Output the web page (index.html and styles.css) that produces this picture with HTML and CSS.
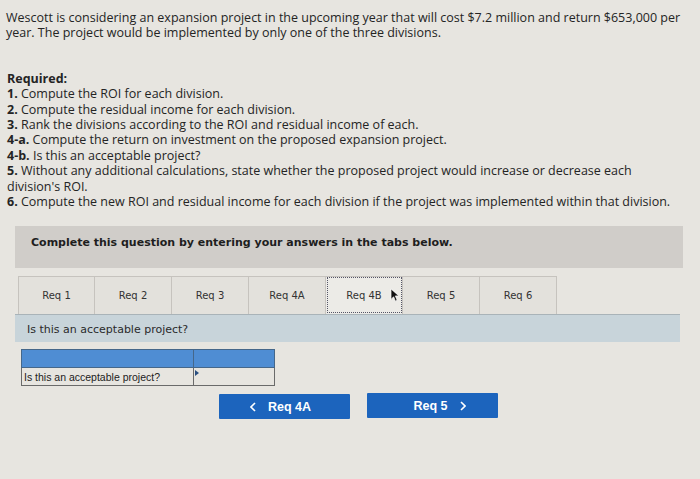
FILE: index.html
```html
<!DOCTYPE html>
<html lang="en">
<head>
  <meta charset="UTF-8" />
  <title>Wescott expansion project</title>
  <link rel="stylesheet" href="styles.css">
</head>
<body>

<div class="problem">
  <p class="intro">Wescott is considering an expansion project in the upcoming year that will cost $7.2 million and return $653,000 per year. The project would be implemented by only one of the three divisions.</p>

  <div class="required">
    <b>Required:</b><br>
    <b>1.</b> Compute the ROI for each division.<br>
    <b>2.</b> Compute the residual income for each division.<br>
    <b>3.</b> Rank the divisions according to the ROI and residual income of each.<br>
    <b>4-a.</b> Compute the return on investment on the proposed expansion project.<br>
    <b>4-b.</b> Is this an acceptable project?<br>
    <b>5.</b> Without any additional calculations, state whether the proposed project would increase or decrease each division's ROI.<br>
    <b>6.</b> Compute the new ROI and residual income for each division if the project was implemented within that division.
  </div>
</div>

<div class="instructions">Complete this question by entering your answers in the tabs below.</div>

<div class="tabs">
  <div class="tab">Req 1</div>
  <div class="tab">Req 2</div>
  <div class="tab">Req 3</div>
  <div class="tab">Req 4A</div>
  <div class="tab active">Req 4B
    <svg class="cursor" viewBox="0 0 10 16" width="9" height="14">
      <path d="M1,1 L1,13 L4,10 L6,15 L8,14 L6,9 L10,9 Z" fill="#111" stroke="#fff" stroke-width="0.8"/>
    </svg>
  </div>
  <div class="tab">Req 5</div>
  <div class="tab">Req 6</div>
</div>

<div class="question">Is this an acceptable project?</div>

<table class="answer">
  <tr class="head"><td class="label-col"></td><td class="value-col"></td></tr>
  <tr><td class="label-col">Is this an acceptable project?</td><td class="value-col"><span class="marker"></span></td></tr>
</table>

<div class="nav">
  <button class="nav-btn prev">
    <svg class="chev" viewBox="0 0 6 10" width="6" height="10"><path d="M5,1 L1,5 L5,9" fill="none" stroke="#fff" stroke-width="1.6"/></svg>
    Req 4A
  </button>
  <button class="nav-btn next">
    Req 5
    <svg class="chev" viewBox="0 0 6 10" width="6" height="10"><path d="M1,1 L5,5 L1,9" fill="none" stroke="#fff" stroke-width="1.6"/></svg>
  </button>
</div>

</body>
</html>
```

FILE: styles.css
```css
body { margin: 0; background: #e7e5e0; font-family: "Open Sans", "Liberation Sans", sans-serif; color: #242424; }

.problem { padding: 10px 6px 0 6px; font-size: 12.5px; line-height: 15.4px; }
.intro { margin: 0 0 30px 0; }
.required { margin: 0 0 0 1px; width: 672px; }
.required b { font-weight: 700; }

.instructions { margin: 17px 17px 0 15px; height: 42px; box-sizing: border-box; padding: 10px 16px; background: #d0cdc9;
  font-family: "DejaVu Sans", Verdana, sans-serif; font-weight: bold; font-size: 11px; color: #1e1e1e; }

.tabs { display: flex; margin: 8px 0 0 18px; height: 38px; }
.tab { width: 77px; box-sizing: border-box; display: flex; align-items: center; justify-content: center; position: relative;
  background: #e3e1dc; border: 1px solid #c6c3be; border-bottom: none;
  font-family: "DejaVu Sans", Verdana, sans-serif; font-size: 10px; color: #333; }
.tab + .tab { border-left: none; }
.tab.active { background: #ecebe7; outline: 1px dotted #556; outline-offset: -2px; }
.cursor { position: absolute; right: 3px; top: 11px; }

.question { margin: 0 20px 0 15px; height: 28px; box-sizing: border-box; padding: 8px 12px; background: #c8d4da; border-top: 1px solid #a9b3b8;
  font-family: "DejaVu Sans", Verdana, sans-serif; font-size: 11px; color: #2a2a2a; }

.answer { margin: 7px 0 0 21px; border-collapse: collapse; font-family: "Liberation Sans", Arial, sans-serif; font-size: 10.5px; color: #222; }
.answer td { border: 1px solid #6a6a6a; padding: 0 2px; height: 17px; }
.answer .head td { background: #4f8dd3; border-color: #45678a; }
.label-col { width: 167px; }
.value-col { width: 76px; position: relative; }
.marker { position: absolute; left: 1px; top: 2px; width: 0; height: 0; border-left: 4px solid #2a4f80; border-top: 3px solid transparent; border-bottom: 3px solid transparent; }

.nav { display: flex; gap: 17px; margin: 8px 0 0 219px; align-items: flex-start; }
.nav-btn { width: 131px; height: 25px; border: none; border-radius: 1px; background: #1c64bd; color: #fff;
  display: flex; align-items: center; justify-content: center; gap: 12px;
  font-family: "Liberation Sans", Arial, sans-serif; font-weight: bold; font-size: 12.5px; padding: 0; }
.nav-btn.next { margin-top: -1px; }
.nav-btn.prev { padding-right: 8px; }
.nav-btn.next { padding-left: 14px; }
```
